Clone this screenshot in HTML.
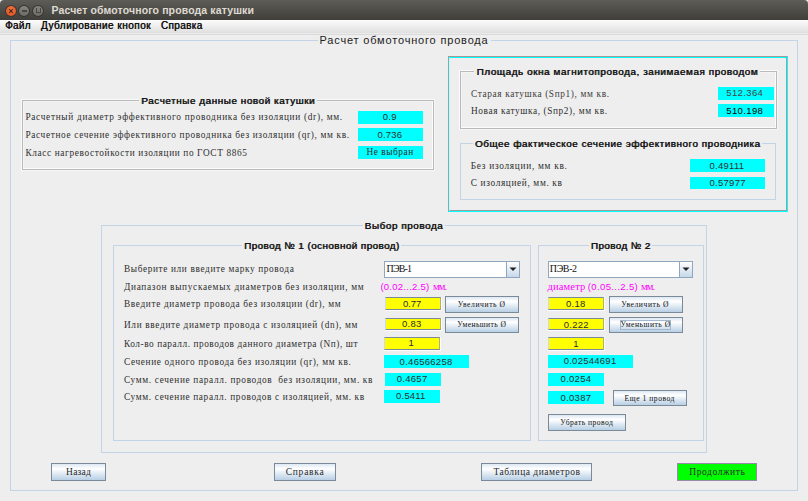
<!DOCTYPE html>
<html><head><meta charset="utf-8"><style>
html,body{margin:0;padding:0;}
body{width:808px;height:501px;overflow:hidden;position:relative;background:#eeeeee;}
.b{position:absolute;box-sizing:border-box;}
.t{position:absolute;white-space:pre;}
</style></head><body>
<div class="b" style="left:0;top:0;width:808px;height:20px;background:linear-gradient(#5d5c56,#3f3e3a);border-radius:4px 4px 0 0;"></div>
<div class="b" style="left:5px;top:4.5px;width:12px;height:12px;border-radius:50%;background:#3a3935;"></div>
<div class="b" style="left:6px;top:5.5px;width:10px;height:10px;border-radius:50%;background:radial-gradient(circle at 50% 35%,#f6763f,#e0491d);"></div>
<svg class="b" style="left:6px;top:5.5px" width="10" height="10"><path d="M3.2 3.2 L6.8 6.8 M6.8 3.2 L3.2 6.8" stroke="#3b2a22" stroke-width="1.1" fill="none"/></svg>
<div class="b" style="left:18px;top:4.5px;width:12px;height:12px;border-radius:50%;background:#363531;"></div>
<div class="b" style="left:19px;top:5.5px;width:10px;height:10px;border-radius:50%;background:linear-gradient(#85847e,#6c6b66);"></div>
<div class="b" style="left:31.5px;top:4.5px;width:12px;height:12px;border-radius:50%;background:#363531;"></div>
<div class="b" style="left:32.5px;top:5.5px;width:10px;height:10px;border-radius:50%;background:linear-gradient(#85847e,#6c6b66);"></div>
<div class="b" style="left:22px;top:10px;width:4.5px;height:1.5px;background:#474642;"></div>
<div class="b" style="left:35.5px;top:8px;width:5px;height:5px;border:1px solid #474642;border-top:none;box-sizing:border-box;"></div>
<div id="t0" class="t" style="left:51.5px;top:5.31px;font-family:'Liberation Sans', sans-serif;font-size:10.5px;line-height:10.5px;font-weight:bold;color:#dfdbd2;letter-spacing:0.126px;">Расчет обмоточного провода катушки</div>
<div class="b" style="left:0;top:20px;width:808px;height:13px;background:linear-gradient(#fcfcfc,#dfdfdf);"></div>
<div class="b" style="left:0;top:33px;width:808px;height:1px;background:#ebebeb;"></div>
<div class="b" style="left:0;top:34px;width:808px;height:1px;background:#dadada;"></div>
<div id="t1" class="t" style="left:5px;top:20.93px;font-family:'Liberation Sans', sans-serif;font-size:10px;line-height:10px;font-weight:normal;color:#111;letter-spacing:0.235px;text-shadow:0.45px 0 0 #111;">Файл</div>
<div id="t2" class="t" style="left:40.8px;top:20.93px;font-family:'Liberation Sans', sans-serif;font-size:10px;line-height:10px;font-weight:normal;color:#111;letter-spacing:0.480px;text-shadow:0.45px 0 0 #111;">Дублирование кнопок</div>
<div id="t3" class="t" style="left:160.7px;top:20.93px;font-family:'Liberation Sans', sans-serif;font-size:10px;line-height:10px;font-weight:normal;color:#111;letter-spacing:0.361px;text-shadow:0.45px 0 0 #111;">Справка</div>
<div class="b" style="left:10px;top:40px;width:788px;height:451px;border:1px solid #c2d4e6;"></div>
<div id="t4" class="t" style="left:319.5px;top:34.99px;font-family:'Liberation Sans', sans-serif;font-size:11px;line-height:11px;font-weight:normal;color:#222;letter-spacing:0.822px;background:#eeeeee;padding:0 2px;margin-left:-2px;">Расчет обмоточного провода</div>
<div class="b" style="left:21px;top:99px;width:414px;height:72px;border-top:1px solid #fbfbfb;border-left:1px solid #fbfbfb;border-right:1px solid #f6f6f6;border-bottom:1px solid #f6f6f6;"></div>
<div class="b" style="left:22px;top:100px;width:412px;height:70px;border:1px solid #bababa;"></div>
<div class="b" style="left:23px;top:101px;width:410px;height:68px;border-top:1px solid #f4f4f4;border-left:1px solid #f4f4f4;border-right:1px solid #fcfcfc;border-bottom:1px solid #fcfcfc;"></div>
<div id="t5" class="t" style="left:141.1px;top:95.92px;font-family:'Liberation Sans', sans-serif;font-size:9.9px;line-height:9.9px;font-weight:normal;color:#111;letter-spacing:0.573px;background:#eeeeee;padding:0 2px;margin-left:-2px;text-shadow:0.6px 0 0 #111;">Расчетные данные новой катушки</div>
<div id="t6" class="t" style="left:25.4px;top:112.91px;font-family:'Liberation Serif', serif;font-size:9.3px;line-height:9.3px;font-weight:normal;color:#2e2e2e;letter-spacing:0.696px;">Расчетный диаметр эффективного проводника без изоляции (dr), мм.</div>
<div id="t7" class="t" style="left:25.4px;top:130.61px;font-family:'Liberation Serif', serif;font-size:9.3px;line-height:9.3px;font-weight:normal;color:#2e2e2e;letter-spacing:0.659px;">Расчетное сечение эффективного проводника без изоляции (qr), мм кв.</div>
<div id="t8" class="t" style="left:25.4px;top:148.91px;font-family:'Liberation Serif', serif;font-size:9.3px;line-height:9.3px;font-weight:normal;color:#2e2e2e;letter-spacing:0.627px;">Класс нагревостойкости изоляции по ГОСТ 8865</div>
<div class="b" style="left:358px;top:111px;width:65px;height:13px;background:#00ffff;"></div>
<div class="b" style="left:358px;top:128px;width:65px;height:13px;background:#00ffff;"></div>
<div class="b" style="left:358px;top:146px;width:65px;height:13px;background:#00ffff;"></div>
<div id="t9" class="t" style="left:382.7px;top:111.76px;font-family:'Liberation Sans', sans-serif;font-size:9.5px;line-height:9.5px;font-weight:normal;color:#2e2e2e;letter-spacing:0.291px;">0.9</div>
<div id="t10" class="t" style="left:377.5px;top:129.66px;font-family:'Liberation Sans', sans-serif;font-size:9.5px;line-height:9.5px;font-weight:normal;color:#2e2e2e;letter-spacing:0.180px;">0.736</div>
<div id="t11" class="t" style="left:366.5px;top:148.21px;font-family:'Liberation Serif', serif;font-size:9.3px;line-height:9.3px;font-weight:normal;color:#2e2e2e;letter-spacing:0.552px;">Не выбран</div>
<div class="b" style="left:448px;top:56px;width:340px;height:156px;border-top:1px solid #a09a98;border-left:1px solid #5cbcbc;border-right:1px solid #00ffff;border-bottom:1px solid #00ffff;"></div>
<div class="b" style="left:449px;top:57px;width:338px;height:154px;border-top:1px solid #00ffff;border-left:1px solid #d8f0f0;border-right:1px solid #9aa0a0;border-bottom:1px solid #9aa0a0;"></div>
<div class="b" style="left:459px;top:70px;width:319px;height:60px;border-top:1px solid #fbfbfb;border-left:1px solid #fbfbfb;border-right:1px solid #f6f6f6;border-bottom:1px solid #f6f6f6;"></div>
<div class="b" style="left:460px;top:71px;width:317px;height:58px;border:1px solid #bababa;"></div>
<div class="b" style="left:461px;top:72px;width:315px;height:56px;border-top:1px solid #f4f4f4;border-left:1px solid #f4f4f4;border-right:1px solid #fcfcfc;border-bottom:1px solid #fcfcfc;"></div>
<div id="t12" class="t" style="left:476.4px;top:66.72px;font-family:'Liberation Sans', sans-serif;font-size:9.9px;line-height:9.9px;font-weight:normal;color:#111;letter-spacing:0.587px;background:#eeeeee;padding:0 2px;margin-left:-2px;text-shadow:0.6px 0 0 #111;">Площадь окна магнитопровода, занимаемая проводом</div>
<div id="t13" class="t" style="left:471px;top:89.51px;font-family:'Liberation Serif', serif;font-size:9.3px;line-height:9.3px;font-weight:normal;color:#404040;letter-spacing:0.636px;">Старая катушка (Sпр1), мм кв.</div>
<div id="t14" class="t" style="left:471px;top:106.71px;font-family:'Liberation Serif', serif;font-size:9.3px;line-height:9.3px;font-weight:normal;color:#2e2e2e;letter-spacing:0.603px;">Новая катушка, (Sпр2), мм кв.</div>
<div class="b" style="left:718px;top:87px;width:56px;height:13px;background:#00ffff;"></div>
<div class="b" style="left:718px;top:104px;width:56px;height:13px;background:#00ffff;"></div>
<div id="t15" class="t" style="left:726.3px;top:87.96px;font-family:'Liberation Sans', sans-serif;font-size:9.5px;line-height:9.5px;font-weight:normal;color:#444;letter-spacing:0.376px;">512.364</div>
<div id="t16" class="t" style="left:726.3px;top:105.56px;font-family:'Liberation Sans', sans-serif;font-size:9.5px;line-height:9.5px;font-weight:normal;color:#000;letter-spacing:0.376px;">510.198</div>
<div class="b" style="left:460px;top:143px;width:316px;height:57px;border:1px solid #c2d4e6;"></div>
<div id="t17" class="t" style="left:474.8px;top:138.92px;font-family:'Liberation Sans', sans-serif;font-size:9.9px;line-height:9.9px;font-weight:normal;color:#111;letter-spacing:0.533px;background:#eeeeee;padding:0 2px;margin-left:-2px;text-shadow:0.6px 0 0 #111;">Общее фактическое сечение эффективного проводника</div>
<div id="t18" class="t" style="left:470.8px;top:161.91px;font-family:'Liberation Serif', serif;font-size:9.3px;line-height:9.3px;font-weight:normal;color:#2e2e2e;letter-spacing:0.715px;">Без изоляции, мм кв.</div>
<div id="t19" class="t" style="left:470.8px;top:178.71px;font-family:'Liberation Serif', serif;font-size:9.3px;line-height:9.3px;font-weight:normal;color:#2e2e2e;letter-spacing:0.639px;">С изоляцией, мм. кв</div>
<div class="b" style="left:690px;top:159px;width:75px;height:13px;background:#00ffff;"></div>
<div class="b" style="left:690px;top:177px;width:75px;height:12px;background:#00ffff;"></div>
<div id="t20" class="t" style="left:709.4px;top:160.86px;font-family:'Liberation Sans', sans-serif;font-size:9.5px;line-height:9.5px;font-weight:normal;color:#2e2e2e;letter-spacing:0.294px;">0.49111</div>
<div id="t21" class="t" style="left:709.4px;top:177.76px;font-family:'Liberation Sans', sans-serif;font-size:9.5px;line-height:9.5px;font-weight:normal;color:#2e2e2e;letter-spacing:0.293px;">0.57977</div>
<div class="b" style="left:101px;top:225px;width:606px;height:228px;border:1px solid #c2d4e6;"></div>
<div id="t22" class="t" style="left:364.5px;top:220.62px;font-family:'Liberation Sans', sans-serif;font-size:9.9px;line-height:9.9px;font-weight:normal;color:#111;letter-spacing:0.577px;background:#eeeeee;padding:0 2px;margin-left:-2px;text-shadow:0.6px 0 0 #111;">Выбор провода</div>
<div class="b" style="left:113px;top:245px;width:418px;height:196px;border:1px solid #c2d4e6;"></div>
<div id="t23" class="t" style="left:243.9px;top:241.02px;font-family:'Liberation Sans', sans-serif;font-size:9.9px;line-height:9.9px;font-weight:normal;color:#111;letter-spacing:0.430px;background:#eeeeee;padding:0 2px;margin-left:-2px;text-shadow:0.6px 0 0 #111;">Провод № 1 (основной провод)</div>
<div class="b" style="left:538px;top:245px;width:166px;height:196px;border:1px solid #c2d4e6;"></div>
<div id="t24" class="t" style="left:590.7px;top:241.02px;font-family:'Liberation Sans', sans-serif;font-size:9.9px;line-height:9.9px;font-weight:normal;color:#111;letter-spacing:0.397px;background:#eeeeee;padding:0 2px;margin-left:-2px;text-shadow:0.6px 0 0 #111;">Провод № 2</div>
<div id="t25" class="t" style="left:124px;top:265.01px;font-family:'Liberation Serif', serif;font-size:9.3px;line-height:9.3px;font-weight:normal;color:#2e2e2e;letter-spacing:0.631px;">Выберите или введите марку провода</div>
<div id="t26" class="t" style="left:124px;top:282.71px;font-family:'Liberation Serif', serif;font-size:9.3px;line-height:9.3px;font-weight:normal;color:#2e2e2e;letter-spacing:0.681px;">Диапазон выпускаемых диаметров без изоляции, мм</div>
<div id="t27" class="t" style="left:124px;top:300.01px;font-family:'Liberation Serif', serif;font-size:9.3px;line-height:9.3px;font-weight:normal;color:#2e2e2e;letter-spacing:0.643px;">Введите диаметр провода без изоляции (dr), мм</div>
<div id="t28" class="t" style="left:124px;top:320.81px;font-family:'Liberation Serif', serif;font-size:9.3px;line-height:9.3px;font-weight:normal;color:#2e2e2e;letter-spacing:0.659px;">Или введите диаметр провода с изоляцией (dn), мм</div>
<div id="t29" class="t" style="left:124px;top:340.31px;font-family:'Liberation Serif', serif;font-size:9.3px;line-height:9.3px;font-weight:normal;color:#2e2e2e;letter-spacing:0.549px;">Кол-во паралл. проводов данного диаметра (Nп), шт</div>
<div id="t30" class="t" style="left:124px;top:358.01px;font-family:'Liberation Serif', serif;font-size:9.3px;line-height:9.3px;font-weight:normal;color:#2e2e2e;letter-spacing:0.636px;">Сечение одного провода без изоляции (qr), мм кв.</div>
<div id="t31" class="t" style="left:124px;top:375.51px;font-family:'Liberation Serif', serif;font-size:9.3px;line-height:9.3px;font-weight:normal;color:#2e2e2e;letter-spacing:0.649px;">Сумм. сечение паралл. проводов  без изоляции, мм. кв</div>
<div id="t32" class="t" style="left:124px;top:393.01px;font-family:'Liberation Serif', serif;font-size:9.3px;line-height:9.3px;font-weight:normal;color:#2e2e2e;letter-spacing:0.642px;">Сумм. сечение паралл. проводов с изоляцией, мм. кв</div>
<div class="b" style="left:384px;top:261px;width:136px;height:17px;background:#ffffff;border:1px solid #8ea6be;"></div>
<div class="b" style="left:506px;top:261px;width:14px;height:17px;background:linear-gradient(#ffffff,#c6d7e8);border:1px solid #8ea6be;"></div>
<svg class="b" style="left:508.5px;top:266.0px" width="8" height="6"><path d="M0.5 1.5 L7.5 1.5 L4 5 Z" fill="#222"/></svg>
<div id="t33" class="t" style="left:386.5px;top:263.82px;font-family:'Liberation Serif', serif;font-size:10px;line-height:10px;font-weight:normal;color:#111;letter-spacing:-0.832px;">ПЭВ-1</div>
<div id="t34" class="t" style="left:380.4px;top:281.86px;font-family:'Liberation Sans', sans-serif;font-size:9.5px;line-height:9.5px;font-weight:normal;color:#ff00ff;letter-spacing:0.268px;">(0.02...2.5)</div>
<div id="t35" class="t" style="left:432.9px;top:282.11px;font-family:'Liberation Serif', serif;font-size:10.5px;line-height:10.5px;font-weight:normal;color:#ff00ff;letter-spacing:-0.861px;">мм.</div>
<div class="b" style="left:385px;top:297px;width:57px;height:14px;background:#ffffff;"></div>
<div class="b" style="left:385px;top:297px;width:56px;height:13px;background:#ffff00;border-top:1px solid #7a8a99;border-bottom:1px solid #7a8a99;border-left:1px solid #cfd8ee;border-right:1px solid #b0b070;"></div>
<div class="b" style="left:385px;top:318px;width:57px;height:13px;background:#ffffff;"></div>
<div class="b" style="left:385px;top:318px;width:56px;height:12px;background:#ffff00;border-top:1px solid #7a8a99;border-bottom:1px solid #7a8a99;border-left:1px solid #cfd8ee;border-right:1px solid #b0b070;"></div>
<div class="b" style="left:384px;top:337px;width:57px;height:14px;background:#ffffff;"></div>
<div class="b" style="left:384px;top:337px;width:56px;height:13px;background:#ffff00;border-top:1px solid #7a8a99;border-bottom:1px solid #7a8a99;border-left:1px solid #cfd8ee;border-right:1px solid #b0b070;"></div>
<div id="t36" class="t" style="left:402.9px;top:298.76px;font-family:'Liberation Sans', sans-serif;font-size:9.5px;line-height:9.5px;font-weight:normal;color:#2e2e2e;letter-spacing:-0.067px;">0.77</div>
<div id="t37" class="t" style="left:402px;top:319.16px;font-family:'Liberation Sans', sans-serif;font-size:9.5px;line-height:9.5px;font-weight:normal;color:#2e2e2e;letter-spacing:0.233px;">0.83</div>
<div id="t38" class="t" style="left:408.6px;top:338.46px;font-family:'Liberation Sans', sans-serif;font-size:9.5px;line-height:9.5px;font-weight:normal;color:#2e2e2e;letter-spacing:0.000px;">1</div>
<div class="b" style="left:445px;top:296px;width:74px;height:17px;background:linear-gradient(#dde8f3 0%,#ffffff 30%,#b8cfe5 100%);border:1px solid #7a8a99;"></div>
<div class="b" style="left:445px;top:317px;width:74px;height:16px;background:linear-gradient(#dde8f3 0%,#ffffff 30%,#b8cfe5 100%);border:1px solid #7a8a99;"></div>
<div id="t39" class="t" style="left:457.8px;top:300.74px;font-family:'Liberation Serif', serif;font-size:7.6px;line-height:7.6px;font-weight:normal;color:#111;letter-spacing:0.596px;">Увеличить Ø</div>
<div id="t40" class="t" style="left:457.3px;top:321.33px;font-family:'Liberation Serif', serif;font-size:7.6px;line-height:7.6px;font-weight:normal;color:#111;letter-spacing:0.410px;">Уменьшить Ø</div>
<div class="b" style="left:384px;top:355px;width:85px;height:13px;background:#00ffff;"></div>
<div class="b" style="left:385px;top:373px;width:56px;height:13px;background:#00ffff;"></div>
<div class="b" style="left:384px;top:390px;width:56px;height:13px;background:#00ffff;"></div>
<div id="t41" class="t" style="left:399.6px;top:356.56px;font-family:'Liberation Sans', sans-serif;font-size:9.5px;line-height:9.5px;font-weight:normal;color:#2e2e2e;letter-spacing:0.277px;">0.46566258</div>
<div id="t42" class="t" style="left:396.8px;top:373.76px;font-family:'Liberation Sans', sans-serif;font-size:9.5px;line-height:9.5px;font-weight:normal;color:#2e2e2e;letter-spacing:0.267px;">0.4657</div>
<div id="t43" class="t" style="left:396.1px;top:391.46px;font-family:'Liberation Sans', sans-serif;font-size:9.5px;line-height:9.5px;font-weight:normal;color:#2e2e2e;letter-spacing:0.188px;">0.5411</div>
<div class="b" style="left:548px;top:261px;width:145px;height:17px;background:#ffffff;border:1px solid #8ea6be;"></div>
<div class="b" style="left:679px;top:261px;width:14px;height:17px;background:linear-gradient(#ffffff,#c6d7e8);border:1px solid #8ea6be;"></div>
<svg class="b" style="left:681.5px;top:266.0px" width="8" height="6"><path d="M0.5 1.5 L7.5 1.5 L4 5 Z" fill="#222"/></svg>
<div id="t44" class="t" style="left:549.8px;top:263.82px;font-family:'Liberation Serif', serif;font-size:10px;line-height:10px;font-weight:normal;color:#111;letter-spacing:-0.382px;">ПЭВ-2</div>
<div id="t45" class="t" style="left:547.4px;top:282.11px;font-family:'Liberation Serif', serif;font-size:10.5px;line-height:10.5px;font-weight:normal;color:#ff00ff;letter-spacing:0.166px;">диаметр</div>
<div id="t46" class="t" style="left:587.8px;top:281.86px;font-family:'Liberation Sans', sans-serif;font-size:9.5px;line-height:9.5px;font-weight:normal;color:#ff00ff;letter-spacing:0.368px;">(0.05...2.5)</div>
<div id="t47" class="t" style="left:641px;top:282.11px;font-family:'Liberation Serif', serif;font-size:10.5px;line-height:10.5px;font-weight:normal;color:#ff00ff;letter-spacing:-0.861px;">мм.</div>
<div class="b" style="left:548px;top:297px;width:57px;height:14px;background:#ffffff;"></div>
<div class="b" style="left:548px;top:297px;width:56px;height:13px;background:#ffff00;border-top:1px solid #7a8a99;border-bottom:1px solid #7a8a99;border-left:1px solid #cfd8ee;border-right:1px solid #b0b070;"></div>
<div class="b" style="left:548px;top:318px;width:57px;height:13px;background:#ffffff;"></div>
<div class="b" style="left:548px;top:318px;width:56px;height:12px;background:#ffff00;border-top:1px solid #7a8a99;border-bottom:1px solid #7a8a99;border-left:1px solid #cfd8ee;border-right:1px solid #b0b070;"></div>
<div class="b" style="left:548px;top:337px;width:57px;height:14px;background:#ffffff;"></div>
<div class="b" style="left:548px;top:337px;width:56px;height:13px;background:#ffff00;border-top:1px solid #7a8a99;border-bottom:1px solid #7a8a99;border-left:1px solid #cfd8ee;border-right:1px solid #b0b070;"></div>
<div id="t48" class="t" style="left:566.1px;top:299.26px;font-family:'Liberation Sans', sans-serif;font-size:9.5px;line-height:9.5px;font-weight:normal;color:#2e2e2e;letter-spacing:0.233px;">0.18</div>
<div id="t49" class="t" style="left:563.7px;top:319.86px;font-family:'Liberation Sans', sans-serif;font-size:9.5px;line-height:9.5px;font-weight:normal;color:#2e2e2e;letter-spacing:0.280px;">0.222</div>
<div id="t50" class="t" style="left:573.3px;top:338.76px;font-family:'Liberation Sans', sans-serif;font-size:9.5px;line-height:9.5px;font-weight:normal;color:#2e2e2e;letter-spacing:0.000px;">1</div>
<div class="b" style="left:609px;top:296px;width:74px;height:17px;background:linear-gradient(#dde8f3 0%,#ffffff 30%,#b8cfe5 100%);border:1px solid #7a8a99;"></div>
<div class="b" style="left:609px;top:317px;width:74px;height:16px;background:linear-gradient(#dde8f3 0%,#ffffff 30%,#b8cfe5 100%);border:1px solid #7a8a99;"></div>
<div class="b" style="left:620px;top:320px;width:51px;height:10px;border:1px solid #a3b8cc;"></div>
<div id="t51" class="t" style="left:621.3px;top:300.63px;font-family:'Liberation Serif', serif;font-size:7.6px;line-height:7.6px;font-weight:normal;color:#111;letter-spacing:0.586px;">Увеличить Ø</div>
<div id="t52" class="t" style="left:620.5px;top:321.33px;font-family:'Liberation Serif', serif;font-size:7.6px;line-height:7.6px;font-weight:normal;color:#111;letter-spacing:0.520px;">Уменьшить Ø</div>
<div class="b" style="left:548px;top:355px;width:85px;height:13px;background:#00ffff;"></div>
<div class="b" style="left:548px;top:373px;width:56px;height:13px;background:#00ffff;"></div>
<div class="b" style="left:548px;top:391px;width:56px;height:13px;background:#00ffff;"></div>
<div id="t53" class="t" style="left:563.7px;top:356.26px;font-family:'Liberation Sans', sans-serif;font-size:9.5px;line-height:9.5px;font-weight:normal;color:#2e2e2e;letter-spacing:0.255px;">0.02544691</div>
<div id="t54" class="t" style="left:560.6px;top:374.26px;font-family:'Liberation Sans', sans-serif;font-size:9.5px;line-height:9.5px;font-weight:normal;color:#2e2e2e;letter-spacing:0.267px;">0.0254</div>
<div id="t55" class="t" style="left:560.6px;top:392.76px;font-family:'Liberation Sans', sans-serif;font-size:9.5px;line-height:9.5px;font-weight:normal;color:#2e2e2e;letter-spacing:0.267px;">0.0387</div>
<div class="b" style="left:613px;top:390px;width:74px;height:16px;background:linear-gradient(#dde8f3 0%,#ffffff 30%,#b8cfe5 100%);border:1px solid #7a8a99;"></div>
<div id="t56" class="t" style="left:624.6px;top:394.63px;font-family:'Liberation Serif', serif;font-size:7.6px;line-height:7.6px;font-weight:normal;color:#111;letter-spacing:0.528px;">Еще 1 провод</div>
<div class="b" style="left:548px;top:414px;width:78px;height:17px;background:linear-gradient(#dde8f3 0%,#ffffff 30%,#b8cfe5 100%);border:1px solid #7a8a99;"></div>
<div id="t57" class="t" style="left:560.3px;top:418.53px;font-family:'Liberation Serif', serif;font-size:7.6px;line-height:7.6px;font-weight:normal;color:#111;letter-spacing:0.463px;">Убрать провод</div>
<div class="b" style="left:51px;top:463px;width:55px;height:18px;background:linear-gradient(#dde8f3 0%,#ffffff 30%,#b8cfe5 100%);border:1px solid #7a8a99;"></div>
<div id="t58" class="t" style="left:66.1px;top:467.94px;font-family:'Liberation Serif', serif;font-size:9.5px;line-height:9.5px;font-weight:normal;color:#2a2a2a;letter-spacing:0.227px;">Назад</div>
<div class="b" style="left:274px;top:463px;width:62px;height:18px;background:linear-gradient(#dde8f3 0%,#ffffff 30%,#b8cfe5 100%);border:1px solid #7a8a99;"></div>
<div id="t59" class="t" style="left:285.7px;top:467.84px;font-family:'Liberation Serif', serif;font-size:9.5px;line-height:9.5px;font-weight:normal;color:#2a2a2a;letter-spacing:0.756px;">Справка</div>
<div class="b" style="left:481px;top:463px;width:111px;height:18px;background:linear-gradient(#dde8f3 0%,#ffffff 30%,#b8cfe5 100%);border:1px solid #7a8a99;"></div>
<div id="t60" class="t" style="left:493.4px;top:467.94px;font-family:'Liberation Serif', serif;font-size:9.5px;line-height:9.5px;font-weight:normal;color:#2a2a2a;letter-spacing:0.506px;">Таблица диаметров</div>
<div class="b" style="left:677px;top:463px;width:80px;height:18px;background:#00ff00;border:1px solid #9a8aa6;"></div>
<div id="t61" class="t" style="left:689.3px;top:467.84px;font-family:'Liberation Serif', serif;font-size:9.5px;line-height:9.5px;font-weight:normal;color:#2a2a2a;letter-spacing:0.564px;">Продолжить</div>
</body></html>
